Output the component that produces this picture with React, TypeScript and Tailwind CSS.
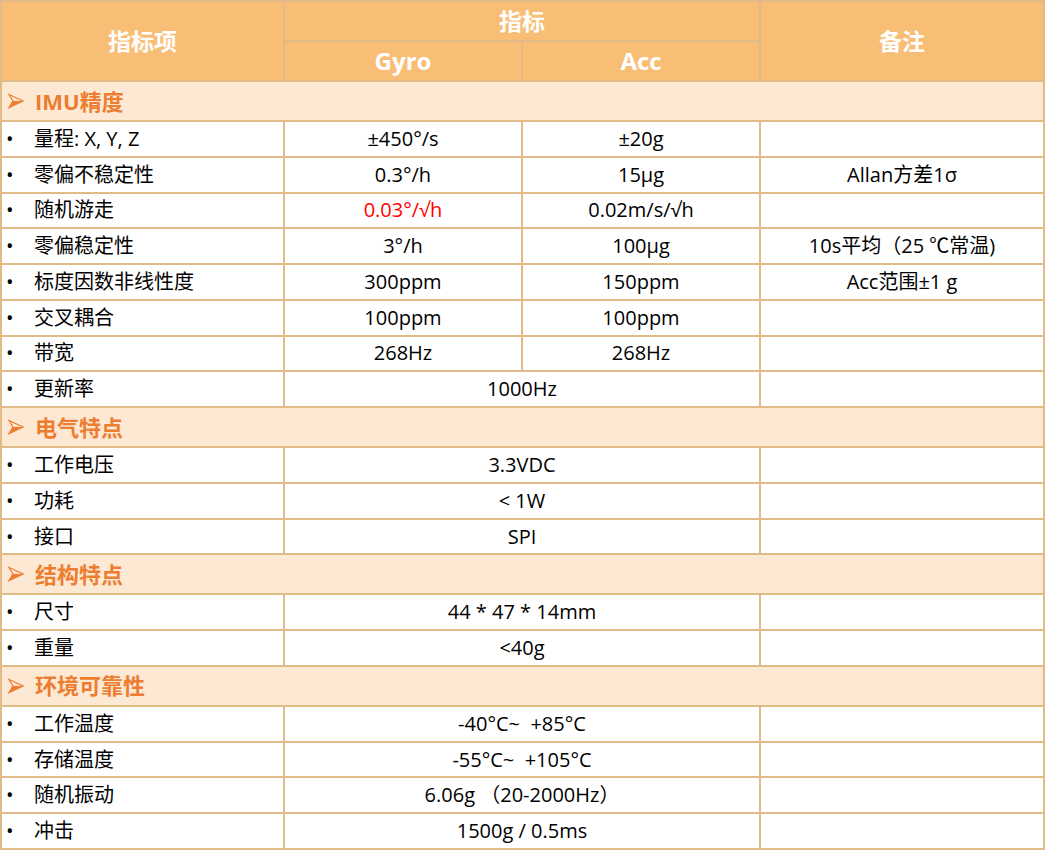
import React from "react";

const FONT = { fontFamily: '"Open Sans", "Noto Sans CJK SC", sans-serif' };

type Row = { label: string; a?: string; b?: string; span?: string; note?: string; red?: boolean };

const sections: { title: string; rows: Row[] }[] = [
  {
    title: "IMU精度",
    rows: [
      { label: "量程: X, Y, Z", a: "±450°/s", b: "±20g" },
      { label: "零偏不稳定性", a: "0.3°/h", b: "15μg", note: "Allan方差1σ" },
      { label: "随机游走", a: "0.03°/√h", b: "0.02m/s/√h", red: true },
      { label: "零偏稳定性", a: "3°/h", b: "100μg", note: "10s平均（25 ℃常温)" },
      { label: "标度因数非线性度", a: "300ppm", b: "150ppm", note: "Acc范围±1 g" },
      { label: "交叉耦合", a: "100ppm", b: "100ppm" },
      { label: "带宽", a: "268Hz", b: "268Hz" },
      { label: "更新率", span: "1000Hz" },
    ],
  },
  {
    title: "电气特点",
    rows: [
      { label: "工作电压", span: "3.3VDC" },
      { label: "功耗", span: "< 1W" },
      { label: "接口", span: "SPI" },
    ],
  },
  {
    title: "结构特点",
    rows: [
      { label: "尺寸", span: "44 * 47 * 14mm" },
      { label: "重量", span: "<40g" },
    ],
  },
  {
    title: "环境可靠性",
    rows: [
      { label: "工作温度", span: "-40°C~  +85°C" },
      { label: "存储温度", span: "-55°C~  +105°C" },
      { label: "随机振动", span: "6.06g （20-2000Hz）" },
      { label: "冲击", span: "1500g / 0.5ms" },
    ],
  },
];

function Arrow() {
  return (
    <svg width="16" height="16" viewBox="0 0 16 16" className="shrink-0">
      <polygon points="1,1.5 15,8 1,14.5 5,8" fill="none" stroke="#ED7D31" strokeWidth="1.2" strokeLinejoin="miter" />
      <polygon points="5,8 15,8 1,14.5" fill="#ED7D31" />
    </svg>
  );
}

const cols = "grid grid-cols-[281px_236px_236px_282px] gap-x-[2px]";
const cell = "bg-white flex items-center justify-center text-[20px] whitespace-pre";

export default function App() {
  return (
    <div style={FONT} className="w-[1045px] h-[850px] bg-[#e0bb88] p-[2px] flex flex-col gap-[2px] text-black">
      <div className={`${cols} grid-rows-[38px_38px] gap-y-[2px] h-[78px] shrink-0`}>
        <div className="row-span-2 bg-[#f9be76] flex items-center justify-center text-white font-bold text-[23px]">指标项</div>
        <div className="col-span-2 bg-[#f9be76] flex items-center justify-center text-white font-bold text-[23px]">指标</div>
        <div className="row-span-2 bg-[#f9be76] flex items-center justify-center text-white font-bold text-[23px]">备注</div>
        <div className="bg-[#f9be76] flex items-center justify-center text-white font-bold text-[24px]">Gyro</div>
        <div className="bg-[#f9be76] flex items-center justify-center text-white font-bold text-[24px]">Acc</div>
      </div>
      {sections.map((s) => (
        <React.Fragment key={s.title}>
          <div className="h-[38px] shrink-0 bg-[#fde9d3] flex items-center pl-[6px] gap-[11px]">
            <Arrow />
            <span className="text-[#ED7D31] font-bold text-[22px]">{s.title}</span>
          </div>
          {s.rows.map((r) => (
            <div key={r.label} className={`${cols} flex-1 min-h-0`}>
              <div className="bg-white flex items-center text-[20px]">
                <span className="w-[32px] pl-[4px] text-[20px]">•</span>
                <span>{r.label}</span>
              </div>
              {r.span !== undefined ? (
                <div className={`col-span-2 ${cell}`}>{r.span}</div>
              ) : (
                <>
                  <div className={`${cell} ${r.red ? "text-[#ff0000]" : ""}`}>{r.a}</div>
                  <div className={cell}>{r.b}</div>
                </>
              )}
              <div className={cell}>{r.note ?? ""}</div>
            </div>
          ))}
        </React.Fragment>
      ))}
    </div>
  );
}
